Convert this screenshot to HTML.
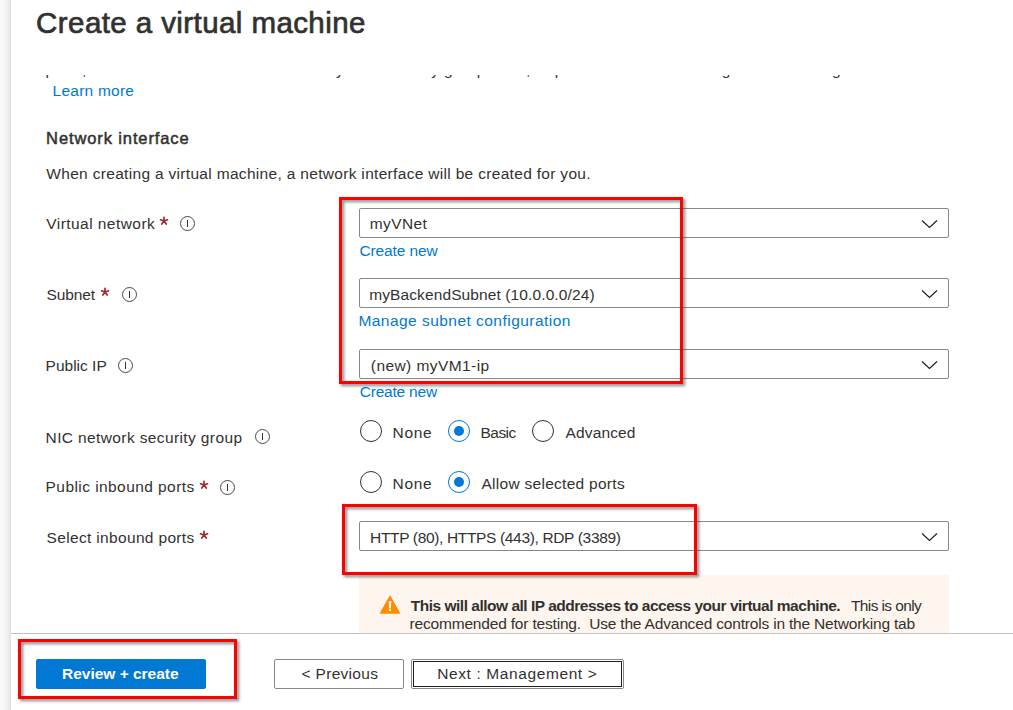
<!DOCTYPE html>
<html><head><meta charset="utf-8">
<style>
html,body{margin:0;padding:0;}
body{width:1013px;height:710px;position:relative;overflow:hidden;background:#fff;font-family:"Liberation Sans",sans-serif;color:#323130;}
.strip{position:absolute;left:0;top:0;width:11px;height:710px;background:linear-gradient(to right,#fbfbfb 0,#f5f5f5 5px,#ececec 9px,#e0e0e0 10.5px,#dedede 11px);}
.t{position:absolute;white-space:nowrap;}
.dd{position:absolute;left:359px;width:588px;height:28px;border:1px solid #8a8886;border-radius:2px;background:#fff;}
.chev{position:absolute;left:920.5px;}
.ast{position:absolute;}
.info{position:absolute;width:13px;height:13px;border:1px solid #4a4a4a;border-radius:50%;}
.info:after{content:"";position:absolute;left:6px;top:3px;width:1px;height:7px;background:#323130;}
.radio{position:absolute;width:20px;height:20px;border:1px solid #323130;border-radius:50%;background:#fff;}
.radio.on{border-color:#0078d4;}
.radio.on:after{content:"";position:absolute;left:5px;top:5px;width:10px;height:10px;border-radius:50%;background:#0078d4;}
.redbox{position:absolute;border:3px solid #ff0000;filter:drop-shadow(2px 2px 1.6px rgba(50,60,60,.62));}
.header{position:absolute;left:11px;top:0;width:1002px;height:75px;background:#fff;z-index:1;}
.header2{position:absolute;left:0;top:0;z-index:2;}
.footer{position:absolute;left:11px;top:633px;width:1002px;height:77px;background:#fff;border-top:1px solid #c2c2c2;}
.btn{position:absolute;height:28px;border:1px solid #8a8886;border-radius:2px;background:#fff;}
</style></head>
<body>
<div class="strip"></div>
<div class="header"></div>

<!-- dropdowns -->
<div class="dd" style="top:208px;"></div>
<div class="dd" style="top:278px;"></div>
<div class="dd" style="top:349px;"></div>
<div class="dd" style="top:521px;"></div>
<svg class="chev" style="top:219px" width="17" height="10" viewBox="0 0 17 10"><path d="M1 1.5 L8.5 8.5 L16 1.5" fill="none" stroke="#201f1e" stroke-width="1.2"/></svg>
<svg class="chev" style="top:289px" width="17" height="10" viewBox="0 0 17 10"><path d="M1 1.5 L8.5 8.5 L16 1.5" fill="none" stroke="#201f1e" stroke-width="1.2"/></svg>
<svg class="chev" style="top:360px" width="17" height="10" viewBox="0 0 17 10"><path d="M1 1.5 L8.5 8.5 L16 1.5" fill="none" stroke="#201f1e" stroke-width="1.2"/></svg>
<svg class="chev" style="top:532px" width="17" height="10" viewBox="0 0 17 10"><path d="M1 1.5 L8.5 8.5 L16 1.5" fill="none" stroke="#201f1e" stroke-width="1.2"/></svg>

<!-- info icons & asterisks -->
<div class="info" style="left:180px;top:216px;"></div>
<div class="info" style="left:122px;top:287px;"></div>
<div class="info" style="left:118px;top:358px;"></div>
<div class="info" style="left:255px;top:429px;"></div>
<div class="info" style="left:220px;top:480px;"></div>
<svg class="ast" style="left:159px;top:216px" width="10" height="10" viewBox="0 0 10 10"><path d="M5 5L5 1.3M5 5L8.5 3.8M5 5L1.5 3.8M5 5L7.2 8.1M5 5L2.8 8.1" stroke="#a4262c" stroke-width="1.7" stroke-linecap="round" fill="none"/></svg>
<svg class="ast" style="left:100px;top:287px" width="10" height="10" viewBox="0 0 10 10"><path d="M5 5L5 1.3M5 5L8.5 3.8M5 5L1.5 3.8M5 5L7.2 8.1M5 5L2.8 8.1" stroke="#a4262c" stroke-width="1.7" stroke-linecap="round" fill="none"/></svg>
<svg class="ast" style="left:199px;top:480px" width="10" height="10" viewBox="0 0 10 10"><path d="M5 5L5 1.3M5 5L8.5 3.8M5 5L1.5 3.8M5 5L7.2 8.1M5 5L2.8 8.1" stroke="#a4262c" stroke-width="1.7" stroke-linecap="round" fill="none"/></svg>
<svg class="ast" style="left:199px;top:530px" width="10" height="10" viewBox="0 0 10 10"><path d="M5 5L5 1.3M5 5L8.5 3.8M5 5L1.5 3.8M5 5L7.2 8.1M5 5L2.8 8.1" stroke="#a4262c" stroke-width="1.7" stroke-linecap="round" fill="none"/></svg>

<!-- radios -->
<div class="radio" style="left:360px;top:420px;"></div>
<div class="radio on" style="left:448px;top:420px;"></div>
<div class="radio" style="left:532px;top:420px;"></div>
<div class="radio" style="left:360px;top:471px;"></div>
<div class="radio on" style="left:448px;top:471px;"></div>

<!-- warning -->
<div style="position:absolute;left:359px;top:575px;width:590px;height:80px;background:#fef6ee;"></div>
<svg style="position:absolute;left:379px;top:595px" width="22" height="20" viewBox="0 0 22 20"><path d="M11 1.6 L20.2 17.9 L1.8 17.9 Z" fill="#ff8c00" stroke="#ff8c00" stroke-width="1.6" stroke-linejoin="round"/><path d="M9.7 6.3 L12.3 6.3 L11.9 13.4 L10.1 13.4 Z" fill="#fff"/><rect x="9.8" y="14.2" width="2.4" height="1.9" rx="0.5" fill="#fff"/></svg>

<!-- red boxes 1,2 -->
<div class="redbox" style="left:339px;top:197px;width:338px;height:181px;"></div>
<div class="redbox" style="left:342px;top:504px;width:349px;height:65px;"></div>

<!-- footer -->
<div class="footer"></div>
<div class="btn" style="left:36px;top:659px;width:168px;background:#0078d4;border-color:#0078d4;"></div>
<div class="btn" style="left:274px;top:659px;width:128px;"></div>
<div class="btn" style="left:411px;top:659px;width:211px;outline:1px solid #201f1e;outline-offset:-3px;"></div>
<div class="redbox" style="left:18px;top:639px;width:213px;height:54px;"></div>

<div class="t" style="left:45.50px;top:59.70px;font-size:15.5px;line-height:20px;letter-spacing:0.401px;font-weight:400;color:#323130;">ports, inbound and outbound connectivity with security group rules, or place behind an existing load balancing</div>
<div class="t" style="left:52.60px;top:80.70px;font-size:15.5px;line-height:20px;letter-spacing:0.229px;font-weight:400;color:#0078d4;">Learn more</div>
<div class="t" style="left:46.30px;top:163.60px;font-size:15.5px;line-height:20px;letter-spacing:0.315px;font-weight:400;color:#323130;">When creating a virtual machine, a network interface will be created for you.</div>
<div class="t" style="left:46.30px;top:213.70px;font-size:15.5px;line-height:20px;letter-spacing:0.444px;font-weight:400;color:#323130;">Virtual network</div>
<div class="t" style="left:46.60px;top:285.10px;font-size:15.5px;line-height:20px;letter-spacing:-0.144px;font-weight:400;color:#323130;">Subnet</div>
<div class="t" style="left:45.60px;top:356.00px;font-size:15.5px;line-height:20px;letter-spacing:-0.004px;font-weight:400;color:#323130;">Public IP</div>
<div class="t" style="left:45.60px;top:427.50px;font-size:15.5px;line-height:20px;letter-spacing:0.380px;font-weight:400;color:#323130;">NIC network security group</div>
<div class="t" style="left:45.60px;top:477.40px;font-size:15.5px;line-height:20px;letter-spacing:0.431px;font-weight:400;color:#323130;">Public inbound ports</div>
<div class="t" style="left:46.60px;top:528.20px;font-size:15.5px;line-height:20px;letter-spacing:0.333px;font-weight:400;color:#323130;">Select inbound ports</div>
<div class="t" style="left:369.70px;top:214.00px;font-size:15.5px;line-height:20px;letter-spacing:0.397px;font-weight:400;color:#323130;">myVNet</div>
<div class="t" style="left:359.40px;top:241.00px;font-size:15.5px;line-height:20px;letter-spacing:-0.119px;font-weight:400;color:#0078d4;">Create new</div>
<div class="t" style="left:369.20px;top:285.00px;font-size:15.5px;line-height:20px;letter-spacing:0.109px;font-weight:400;color:#323130;">myBackendSubnet (10.0.0.0/24)</div>
<div class="t" style="left:358.40px;top:311.00px;font-size:15.5px;line-height:20px;letter-spacing:0.465px;font-weight:400;color:#0078d4;">Manage subnet configuration</div>
<div class="t" style="left:370.80px;top:355.50px;font-size:15.5px;line-height:20px;letter-spacing:0.423px;font-weight:400;color:#323130;">(new) myVM1-ip</div>
<div class="t" style="left:359.70px;top:381.50px;font-size:15.5px;line-height:20px;letter-spacing:-0.208px;font-weight:400;color:#0078d4;">Create new</div>
<div class="t" style="left:392.60px;top:422.80px;font-size:15.5px;line-height:20px;letter-spacing:0.655px;font-weight:400;color:#323130;">None</div>
<div class="t" style="left:480.50px;top:422.80px;font-size:15.5px;line-height:20px;letter-spacing:-0.538px;font-weight:400;color:#323130;">Basic</div>
<div class="t" style="left:565.60px;top:422.80px;font-size:15.5px;line-height:20px;letter-spacing:0.126px;font-weight:400;color:#323130;">Advanced</div>
<div class="t" style="left:392.60px;top:473.60px;font-size:15.5px;line-height:20px;letter-spacing:0.655px;font-weight:400;color:#323130;">None</div>
<div class="t" style="left:481.50px;top:473.60px;font-size:15.5px;line-height:20px;letter-spacing:0.279px;font-weight:400;color:#323130;">Allow selected ports</div>
<div class="t" style="left:370.10px;top:527.90px;font-size:15.5px;line-height:20px;letter-spacing:-0.344px;font-weight:400;color:#323130;">HTTP (80), HTTPS (443), RDP (3389)</div>
<div class="t" style="left:410.70px;top:595.90px;font-size:15.5px;line-height:20px;letter-spacing:-0.487px;font-weight:700;color:#323130;">This will allow all IP addresses to access your virtual machine.</div>
<div class="t" style="left:851.00px;top:595.90px;font-size:15.5px;line-height:20px;letter-spacing:-0.616px;font-weight:400;color:#323130;">This is only</div>
<div class="t" style="left:409.50px;top:613.60px;font-size:15.5px;line-height:20px;letter-spacing:-0.181px;font-weight:400;color:#323130;">recommended for testing.  Use the Advanced controls in the Networking tab</div>
<div class="t" style="left:62.00px;top:664.10px;font-size:15.5px;line-height:20px;letter-spacing:-0.010px;font-weight:700;color:#ffffff;">Review + create</div>
<div class="t" style="left:301.60px;top:663.90px;font-size:15.5px;line-height:20px;letter-spacing:0.299px;font-weight:400;color:#323130;">&lt; Previous</div>
<div class="t" style="left:437.20px;top:663.80px;font-size:15.5px;line-height:20px;letter-spacing:0.607px;font-weight:400;color:#323130;">Next : Management &gt;</div>
<div class="t" style="z-index:2;left:36.10px;top:3.80px;font-size:29.5px;line-height:38px;letter-spacing:0.416px;font-weight:400;color:#323130;-webkit-text-stroke:0.7px #323130;">Create a virtual machine</div>
<div class="t" style="left:46.10px;top:127.60px;font-size:16.5px;line-height:21px;letter-spacing:0.887px;font-weight:400;color:#323130;-webkit-text-stroke:0.5px #323130;">Network interface</div>
</body></html>
